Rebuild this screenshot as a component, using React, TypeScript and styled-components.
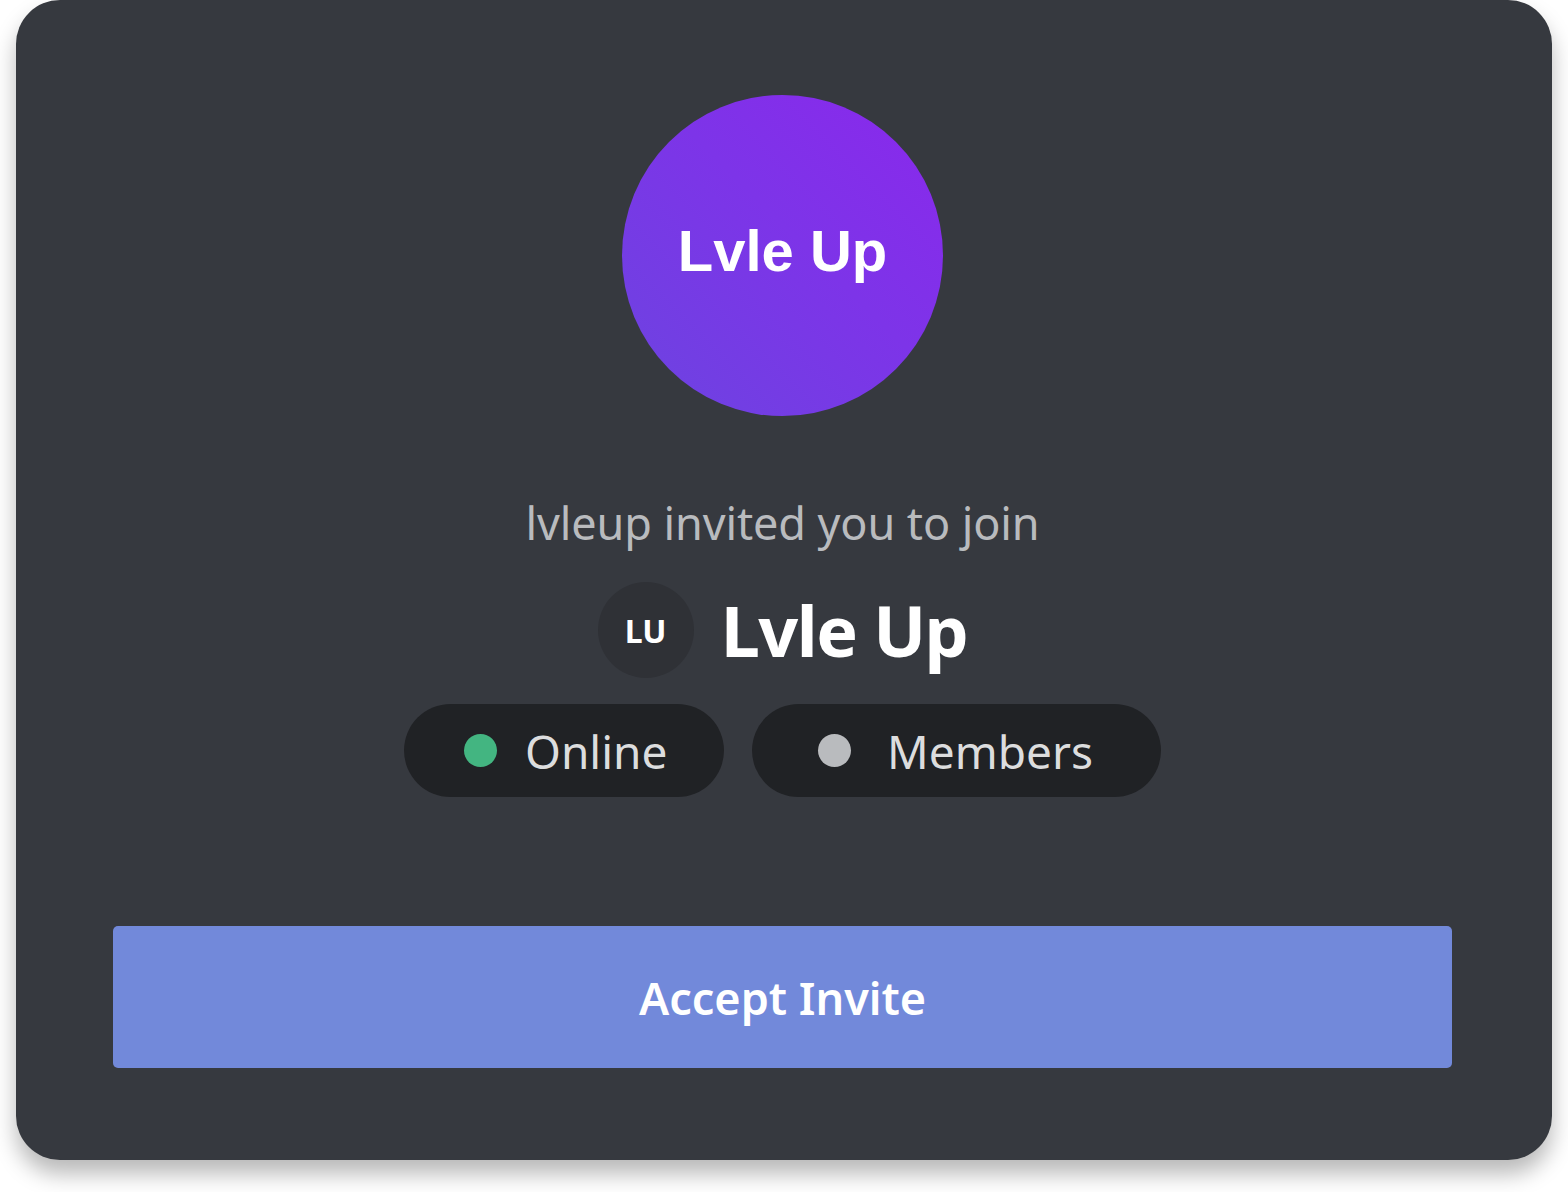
import React from 'react'
import styled, { createGlobalStyle } from 'styled-components'

const GlobalStyle = createGlobalStyle`
  html, body {
    margin: 0;
    padding: 0;
    background: #ffffff;
  }
  body {
    font-family: 'Noto Sans', 'Open Sans', sans-serif;
  }
`

const InviteCard = () => {
  return (
    <Page>
      <GlobalStyle />
      <Card>
        <ServerIcon>Lvle Up</ServerIcon>
        <Invited>lvleup invited you to join</Invited>
        <ServerRow>
          <MiniIcon>LU</MiniIcon>
          <ServerName>Lvle Up</ServerName>
        </ServerRow>
        <Stats>
          <Pill>
            <Dot color='#43b581' />
            <PillText>Online</PillText>
          </Pill>
          <Pill wide>
            <Dot color='#b9bbbe' />
            <PillText>Members</PillText>
          </Pill>
        </Stats>
        <AcceptButton>Accept Invite</AcceptButton>
      </Card>
    </Page>
  )
}

const Page = styled.div`
  width: 1568px;
  height: 1192px;
  padding: 0 16px;
  box-sizing: border-box;
`

const Card = styled.div`
  width: 1536px;
  height: 1160px;
  box-sizing: border-box;
  padding: 95px 100px 0 97px;
  background: #36393f;
  border-radius: 44px;
  box-shadow: 0 14px 22px rgba(0, 0, 0, 0.28);
  display: flex;
  flex-direction: column;
  align-items: center;
`

const ServerIcon = styled.div`
  width: 321px;
  height: 321px;
  border-radius: 50%;
  background: linear-gradient(225deg, #8a28ec 0%, #7d34e8 45%, #6c44e0 100%);
  color: #ffffff;
  font-family: 'Liberation Sans', Arial, sans-serif;
  font-weight: 700;
  font-size: 58px;
  display: flex;
  align-items: center;
  justify-content: center;
  padding-bottom: 10px;
  box-sizing: border-box;
`

const Invited = styled.div`
  margin-top: 79px;
  font-size: 45px;
  line-height: 56px;
  color: #b9bbbe;
  letter-spacing: -0.1px;
`

const ServerRow = styled.div`
  margin-top: 31px;
  display: flex;
  align-items: center;
  gap: 27px;
`

const MiniIcon = styled.div`
  width: 96px;
  height: 96px;
  border-radius: 50%;
  background: #2f3136;
  color: #ffffff;
  font-size: 32px;
  font-weight: 700;
  display: flex;
  align-items: center;
  justify-content: center;
`

const ServerName = styled.div`
  font-size: 70px;
  font-weight: 700;
  color: #ffffff;
  line-height: 96px;
  letter-spacing: -1.5px;
`

const Stats = styled.div`
  margin-top: 26px;
  display: flex;
  gap: 28px;
`

const Pill = styled.div<{ wide?: boolean }>`
  height: 93px;
  width: ${props => (props.wide ? '409px' : '320px')};
  box-sizing: border-box;
  padding-left: ${props => (props.wide ? '66px' : '60px')};
  border-radius: 47px;
  background: #202225;
  display: flex;
  align-items: center;
  gap: ${props => (props.wide ? '36px' : '28px')};
`

const Dot = styled.span<{ color: string }>`
  width: 33px;
  height: 33px;
  border-radius: 50%;
  background: ${props => props.color};
  flex-shrink: 0;
`

const PillText = styled.span`
  font-size: 46px;
  color: #dcddde;
`

const AcceptButton = styled.button`
  margin-top: 129px;
  width: 100%;
  height: 142px;
  border: none;
  border-radius: 5px;
  background: #7289da;
  color: #ffffff;
  font-family: 'Noto Sans', 'Open Sans', sans-serif;
  font-size: 45px;
  font-weight: 600;
  cursor: pointer;
`

export default InviteCard
